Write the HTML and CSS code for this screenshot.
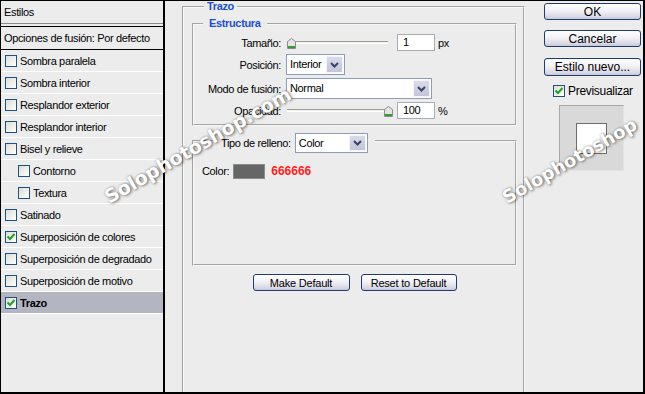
FILE: index.html
```html
<!DOCTYPE html>
<html>

<head>
  <meta charset="utf-8">
  <link rel="stylesheet" href="styles.css">
</head>

<body>

  <div class="dialog">
    <div class="styles">
      <div class="styles-head">Estilos</div>
      <ul class="style-list">
        <li class="blend">Opciones de fusión: Por defecto</li>
        <li><span class="check"></span>Sombra paralela</li>
        <li><span class="check"></span>Sombra interior</li>
        <li><span class="check"></span>Resplandor exterior</li>
        <li><span class="check"></span>Resplandor interior</li>
        <li><span class="check"></span>Bisel y relieve</li>
        <li class="sub"><span class="check"></span>Contorno</li>
        <li class="sub"><span class="check"></span>Textura</li>
        <li><span class="check"></span>Satinado</li>
        <li><span class="check"><svg width="10" height="10" viewBox="0 0 10 10"><path d="M1.5 4.5 L4 7 L8.5 2" fill="none" stroke="#22a022" stroke-width="2"/></svg></span>Superposición de colores</li>
        <li><span class="check"></span>Superposición de degradado</li>
        <li><span class="check"></span>Superposición de motivo</li>
        <li class="active"><span class="check"><svg width="10" height="10" viewBox="0 0 10 10"><path d="M1.5 4.5 L4 7 L8.5 2" fill="none" stroke="#22a022" stroke-width="2"/></svg></span>Trazo</li>
      </ul>
    </div>

    <div class="settings">
      <fieldset class="group stroke">
        <legend>Trazo</legend>

        <fieldset class="group structure">
          <legend>Estructura</legend>
          <div class="rows">
            <div class="row">
              <span class="label">Tamaño:</span>
              <div class="slider">
                <span class="track"></span>
                <svg class="thumb thumb-min" width="9" height="11" viewBox="0 0 9 11"><path d="M0.5 3.5 L4.5 0.5 L8.5 3.5 V10.5 H0.5 Z" fill="#e4e4e4" stroke="#8c8c8c"/><rect x="1" y="8" width="7" height="2" fill="#2f9f2f"/></svg>
              </div>
              <span class="num">1</span>
              <span class="unit">px</span>
            </div>
            <div class="row">
              <span class="label">Posición:</span>
              <div class="select pos-select">
                <span class="select-value">Interior</span>
                <span class="select-btn"><svg width="9" height="6" viewBox="0 0 9 6"><path d="M1 1 L4.5 4.5 L8 1" fill="none" stroke="#36446a" stroke-width="2"/></svg></span>
              </div>
            </div>
            <div class="row">
              <span class="label">Modo de fusión:</span>
              <div class="select mode-select">
                <span class="select-value">Normal</span>
                <span class="select-btn"><svg width="9" height="6" viewBox="0 0 9 6"><path d="M1 1 L4.5 4.5 L8 1" fill="none" stroke="#36446a" stroke-width="2"/></svg></span>
              </div>
            </div>
            <div class="row">
              <span class="label">Opacidad:</span>
              <div class="slider">
                <span class="track"></span>
                <svg class="thumb thumb-max" width="9" height="11" viewBox="0 0 9 11"><path d="M0.5 3.5 L4.5 0.5 L8.5 3.5 V10.5 H0.5 Z" fill="#e4e4e4" stroke="#8c8c8c"/><rect x="1" y="8" width="7" height="2" fill="#2f9f2f"/></svg>
              </div>
              <span class="num">100</span>
              <span class="unit">%</span>
            </div>
          </div>
        </fieldset>

        <fieldset class="group fill">
          <legend class="fill-legend">
            <span>Tipo de relleno:</span>
            <div class="select fill-select">
              <span class="select-value">Color</span>
              <span class="select-btn"><svg width="9" height="6" viewBox="0 0 9 6"><path d="M1 1 L4.5 4.5 L8 1" fill="none" stroke="#36446a" stroke-width="2"/></svg></span>
            </div>
          </legend>
          <div class="fill-body">
            <div class="color-row">
              <span>Color:</span>
              <span class="swatch"></span>
              <span class="hex">666666</span>
            </div>
          </div>
        </fieldset>

        <div class="defaults">
          <div class="btn small make">Make Default</div>
          <div class="btn small reset">Reset to Default</div>
        </div>
      </fieldset>
    </div>

    <div class="actions">
      <div class="btn">OK</div>
      <div class="btn">Cancelar</div>
      <div class="btn new">Estilo nuevo...</div>
      <label class="preview-toggle"><span class="check"><svg width="10" height="10" viewBox="0 0 10 10"><path d="M1.5 4.5 L4 7 L8.5 2" fill="none" stroke="#22a022" stroke-width="2"/></svg></span>Previsualizar</label>
      <div class="preview"><span class="preview-box"></span></div>
    </div>

    <span class="watermark wm-left">Solophotoshop.com</span>
    <span class="watermark wm-right">Solophotoshop</span>
  </div>

</body>

</html>
```

FILE: styles.css
```css
* {
  box-sizing: border-box;
}

body {
  margin: 0;
  background-color: #ececec;
  font-family: "Liberation Sans", Arial, sans-serif;
  font-size: 11px;
  letter-spacing: -0.35px;
  color: #000;
}

.dialog {
  position: relative;
  display: flex;
  width: 645px;
  height: 394px;
  overflow: hidden;
  background-color: #ececec;
  border-style: solid;
  border-color: #000;
  border-width: 1px 2px 2px 1px;
}

/* left list */
.styles {
  flex: none;
  width: 164px;
  border-right: 2px solid #000;
}

.styles-head {
  height: 23px;
  line-height: 22px;
  padding-left: 3px;
  border-bottom: 1px solid #8a8a8a;
  margin-bottom: 2px;
}

.style-list {
  list-style: none;
  margin: 0;
  padding: 0;
  border-top: 1px solid #000;
}

.style-list li {
  display: flex;
  align-items: center;
  gap: 3px;
  height: 22px;
  padding-left: 4px;
  border-bottom: 1px solid #fff;
}

.style-list .blend {
  height: 23px;
  padding-left: 3px;
  border-bottom-color: #000;
}

.style-list .sub {
  padding-left: 17px;
}

.style-list .active {
  background-color: #b3b5c0;
  font-weight: bold;
}

.check {
  display: flex;
  align-items: center;
  justify-content: center;
  flex: none;
  width: 12px;
  height: 12px;
  border: 1px solid #1c5180;
  background: linear-gradient(135deg, #dcdcd6, #fff);
}

/* middle settings */
.settings {
  flex: none;
  width: 372px;
  padding-left: 17px;
}

fieldset.group {
  margin: 0;
  padding: 0;
  min-width: 0;
  border: 2px groove #f8f8f8;
}

fieldset.group legend {
  margin-left: 12px;
  padding: 0 3px;
  line-height: 13px;
  color: #1a4fcf;
  font-weight: bold;
}

.stroke {
  width: 343px;
  height: 420px;
  margin-top: -1px !important;
  padding: 4px 6px 0 8px !important;
}

.structure {
  width: 325px;
  padding: 4px 0 5px 0 !important;
}

.structure legend {
  margin-left: 9px !important;
  padding: 0 6px !important;
}

.rows {
  display: flex;
  flex-direction: column;
  gap: 3px;
}

.row {
  display: flex;
  align-items: center;
}

.label {
  width: 87px;
  margin-right: 5px;
  text-align: right;
}

.slider {
  position: relative;
  width: 106px;
  height: 17px;
  margin-right: 5px;
}

.track {
  position: absolute;
  left: 1px;
  right: 4px;
  top: 7px;
  height: 3px;
  background-color: #f4f3e8;
  border-top: 1px solid #9c9c9c;
  border-bottom: 1px solid #fff;
}

.thumb {
  position: absolute;
  top: 4px;
}

.thumb-min {
  left: 1px;
}

.thumb-max {
  left: 98px;
}

.num {
  width: 38px;
  height: 17px;
  padding-left: 5px;
  line-height: 15px;
  background-color: #fff;
  border: 1px solid #a5acb2;
}

.unit {
  margin-left: 3px;
}

.select {
  display: flex;
  height: 21px;
  background-color: #fff;
  border: 1px solid #8c9cb8;
}

.select-value {
  flex: 1;
  padding-left: 3px;
  line-height: 19px;
}

.select-btn {
  display: flex;
  align-items: center;
  justify-content: center;
  width: 17px;
  margin: 1px;
  border: 1px solid #f4f4fa;
  background: linear-gradient(#dadbea, #c2c4d8);
}

.pos-select {
  width: 59px;
}

.mode-select {
  width: 146px;
}

.fill {
  width: 325px;
  margin-top: 3px !important;
  padding: 10px 0 0 8px !important;
}

.fill .fill-legend {
  display: flex;
  align-items: center;
  gap: 4px;
  margin-left: 13px;
  padding: 4px 7px 0 6px;
  color: #000;
  font-weight: normal;
}

.fill-select {
  width: 73px;
  height: 20px;
}

.fill-select .select-value {
  line-height: 18px;
}

.fill-body {
  height: 101px;
}

.color-row {
  display: flex;
  align-items: center;
  height: 16px;
}

.swatch {
  width: 32px;
  height: 15px;
  margin-left: 4px;
  background-color: #666;
  border: 1px solid #8a8a8a;
}

.hex {
  margin-left: 6px;
  color: #ff1e1e;
  font-size: 12px;
  font-weight: bold;
  letter-spacing: 0;
}

.defaults {
  display: flex;
  justify-content: center;
  gap: 11px;
  margin-top: 8px;
}

/* buttons */
.btn {
  display: flex;
  align-items: center;
  justify-content: center;
  width: 97px;
  height: 17px;
  margin-bottom: 10px;
  font-size: 12px;
  letter-spacing: 0;
  border: 1px solid #1d3c70;
  border-radius: 3px;
  background: linear-gradient(#fff, #f2f2f6 45%, #d8d8e4 85%, #c6c6d6);
}

.btn.small {
  margin-bottom: 0;
  font-size: 11px;
  letter-spacing: -0.2px;
}

.btn.reset {
  width: 96px;
}

/* right column */
.actions {
  flex: 1;
  display: flex;
  flex-direction: column;
  align-items: flex-start;
  padding: 2px 0 0 7px;
}

.actions .btn:nth-child(2) {
  margin-bottom: 11px;
}

.btn.new {
  height: 18px;
  margin-bottom: 9px;
}

.preview-toggle {
  display: flex;
  align-items: center;
  gap: 3px;
  height: 12px;
  margin-left: 9px;
  font-size: 12px;
  letter-spacing: -0.3px;
}

.preview {
  display: flex;
  align-items: center;
  justify-content: center;
  width: 65px;
  height: 66px;
  margin: 8px 0 0 15px;
  background-color: #d9d9d9;
  border: 1px solid;
  border-color: #a8a8a8 #e2e2e2 #e2e2e2 #a8a8a8;
}

.preview-box {
  width: 31px;
  height: 31px;
  background-color: #fff;
  border: 1px solid #6c6c6c;
}

/* site watermark over the screenshot */
.watermark {
  position: absolute;
  font-family: "DejaVu Sans", sans-serif;
  font-size: 19px;
  font-weight: bold;
  line-height: 24px;
  letter-spacing: 0;
  color: #fff;
  white-space: nowrap;
  text-shadow: 1px 1px 3px rgba(0, 0, 0, 0.55), 0 0 2px rgba(0, 0, 0, 0.25);
  transform-origin: 0 50%;
  transform: rotate(-30deg);
}

.wm-left {
  left: 105px;
  top: 185px;
}

.wm-right {
  left: 503px;
  top: 186px;
  font-size: 18px;
}
```
